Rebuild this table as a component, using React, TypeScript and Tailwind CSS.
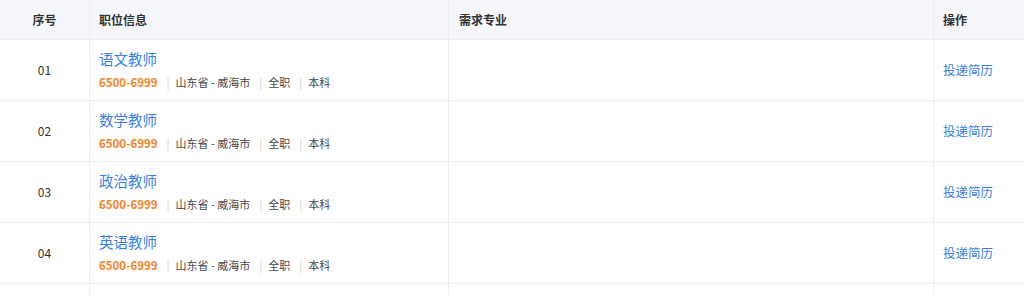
const jobs = [
  { no: "01", title: "语文教师" },
  { no: "02", title: "数学教师" },
  { no: "03", title: "政治教师" },
  { no: "04", title: "英语教师" },
];

const cols = "grid grid-cols-[90px_359px_485px_90px]";

const Sep = () => <span className="ml-[9px] mr-[6px] text-[#cfcfcf]">|</span>;

export default function App() {
  return (
    <div
      className="w-[1024px] h-[295px] overflow-hidden bg-white text-[#333]"
      style={{ fontFamily: '"Noto Sans CJK SC", "Noto Sans", sans-serif' }}
    >
      <div className={`${cols} h-[40px] bg-[#f5f6fa] text-[12px] font-bold text-[#333]`}>
        <div className="flex items-center justify-center border-r border-b border-[#ebedf3]">序号</div>
        <div className="flex items-center px-[9px] border-r border-b border-[#ebedf3]">职位信息</div>
        <div className="flex items-center px-[10px] border-r border-b border-[#ebedf3]">需求专业</div>
        <div className="flex items-center px-[9px] border-b border-[#ebedf3]">操作</div>
      </div>

      {jobs.map((job) => (
        <div key={job.no} className={`${cols} h-[61px]`}>
          <div className="flex items-center justify-center border-r border-b border-[#ebedf3] text-[12px] text-[#333]">
            {job.no}
          </div>
          <div className="flex flex-col justify-center px-[9px] pb-[1px] border-r border-b border-[#ebedf3]">
            <div className="text-[14.5px] leading-[20px] text-[#3a7fe4]">{job.title}</div>
            <div className="mt-[4px] flex items-center text-[11px] leading-[18px] text-[#484848]">
              <span className="text-[11.5px] font-bold text-[#f5821f]">6500-6999</span>
              <Sep />
              <span>山东省 - 威海市</span>
              <Sep />
              <span>全职</span>
              <Sep />
              <span>本科</span>
            </div>
          </div>
          <div className="border-r border-b border-[#ebedf3]" />
          <div className="flex items-center px-[9px] border-b border-[#ebedf3] text-[12.5px] text-[#3a7fe4]">
            投递简历
          </div>
        </div>
      ))}

      {/* next row, cut off by the window */}
      <div className={`${cols} h-[61px]`}>
        <div className="border-r border-[#ebedf3]" />
        <div className="border-r border-[#ebedf3]" />
        <div className="border-r border-[#ebedf3]" />
        <div />
      </div>
    </div>
  );
}
